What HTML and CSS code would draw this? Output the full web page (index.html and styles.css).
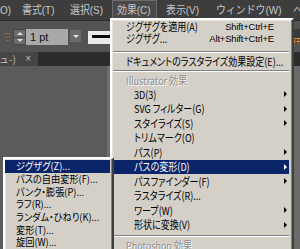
FILE: index.html
```html
<!DOCTYPE html>
<html lang="ja">
<head>
<meta charset="utf-8">
<link rel="stylesheet" href="styles.css">
</head>
<body>
<div class="app">
  <div class="menubar">
    <span class="mb-item first"><span class="t">O)</span></span>
    <span class="mb-item"><span class="t">書式(T)</span></span>
    <span class="mb-item"><span class="t">選択(S)</span></span>
    <span class="mb-item active"><span class="t">効果(C)</span></span>
    <span class="mb-item view"><span class="t">表示(V)</span></span>
    <span class="mb-item win"><span class="t">ウィンドウ(W)</span></span>
    <span class="mb-item"><span class="t">ヘ</span></span>
  </div>
  <div class="toolbar">
    <svg class="stroke-icon" width="7" height="10" viewBox="0 0 7 10">
      <rect x="0" y="1" width="7" height="1" fill="#8a6b45"/>
      <rect x="1" y="4" width="5" height="2" fill="#7a5c3a"/>
      <rect x="2" y="8" width="3" height="1" fill="#8a6b45"/>
    </svg>
    <span class="spinner">
      <span class="spin"><span class="tri-up"></span></span>
      <span class="spin"><span class="tri-down"></span></span>
    </span>
    <span class="field">1 pt</span>
    <span class="dropbtn"><span class="tri-down light"></span></span>
    <span class="preview"><span class="stroke-line"></span></span>
    <span class="tb-right"><span class="orange">用</span></span>
  </div>
  <div class="tabbar">
    <div class="tab"><span class="tab-title">ュ-)</span><span class="tab-x">×</span></div>
  </div>
  <div class="workspace">
    <div class="canvas"></div>
    <div class="side"></div>
  </div>

  <div class="menu main-menu">
    <div class="mi r12"><span class="lbl">ジグザグを適用(A)</span><span class="sc">Shift+Ctrl+E</span></div>
    <div class="mi"><span class="lbl">ジグザグ...</span><span class="sc">Alt+Shift+Ctrl+E</span></div>
    <div class="sep s1"><span class="rule"></span></div>
    <div class="mi"><span class="lbl">ドキュメントのラスタライズ効果設定(E)...</span></div>
    <div class="sep s2"><span class="rule"></span></div>
    <div class="mi hdr"><span class="lbl">Illustrator 効果</span></div>
    <div class="mi fx"><span class="lbl">3D(3)</span><span class="arrow"></span></div>
    <div class="mi fx"><span class="lbl">SVG フィルター(G)</span><span class="arrow"></span></div>
    <div class="mi fx"><span class="lbl">スタイライズ(S)</span><span class="arrow"></span></div>
    <div class="mi fx"><span class="lbl">トリムマーク(O)</span></div>
    <div class="mi fx"><span class="lbl">パス(P)</span><span class="arrow"></span></div>
    <div class="mi fx hl"><span class="lbl">パスの変形(D)</span><span class="arrow"></span></div>
    <div class="mi fx"><span class="lbl">パスファインダー(F)</span><span class="arrow"></span></div>
    <div class="mi fx"><span class="lbl">ラスタライズ(R)...</span></div>
    <div class="mi fx"><span class="lbl">ワープ(W)</span><span class="arrow"></span></div>
    <div class="mi fx"><span class="lbl">形状に変換(V)</span><span class="arrow"></span></div>
    <div class="sep s3"><span class="rule"></span></div>
    <div class="mi hdr ps"><span class="lbl">Photoshop 効果</span></div>
  </div>

  <div class="menu sub-menu">
    <div class="si hl"><span class="lbl">ジグザグ(Z)...</span></div>
    <div class="si"><span class="lbl">パスの自由変形(F)...</span></div>
    <div class="si"><span class="lbl">パンク・膨張(P)...</span></div>
    <div class="si"><span class="lbl">ラフ(R)...</span></div>
    <div class="si"><span class="lbl">ランダム・ひねり(K)...</span></div>
    <div class="si"><span class="lbl">変形(T)...</span></div>
    <div class="si"><span class="lbl">旋回(W)...</span></div>
  </div>
</div>
</body>
</html>
```

FILE: styles.css
```css
* { box-sizing: border-box; }
html, body { margin: 0; padding: 0; }
body {
  width: 300px;
  height: 249px;
  overflow: hidden;
  background: #5b5b5b;
  font-family: "Noto Sans CJK JP", sans-serif;
}
.app {
  position: relative;
  width: 300px;
  height: 249px;
  display: flex;
  flex-direction: column;
}

/* ---------- menu bar ---------- */
.menubar {
  height: 21px;
  flex: none;
  display: grid;
  grid-template-columns: 15px 48px 49px 45px 52px 77px 1fr;
  background: #3d3d3d;
  border-bottom: 1px solid #2b2b2b;
  color: #c6c6c6;
  font-family: "Liberation Sans", "Noto Sans CJK JP", sans-serif;
  font-size: 11px;
  white-space: nowrap;
}
.mb-item {
  display: flex;
  align-items: center;
  padding-left: 7px;
  line-height: 1;
}
.mb-item .t {
  display: inline-block;
  transform: scaleX(0.9);
  transform-origin: left center;
}
.mb-item.first { padding-left: 0; }
.mb-item.view { padding-left: 9px; }
.mb-item.active {
  background: #4a4a4a;
  border: 1px solid #6c6c6c;
  border-bottom: none;
  padding-left: 4px;
}

/* ---------- control bar ---------- */
.toolbar {
  height: 27px;
  flex: none;
  display: flex;
  align-items: flex-start;
  padding: 8px 0 0 4px;
  background: #535353;
}
.stroke-icon { margin-top: 3px; }
.spinner {
  margin-left: 2px;
  width: 13px;
  height: 16px;
  display: flex;
  flex-direction: column;
}
.spin {
  flex: 1;
  display: flex;
  align-items: center;
  justify-content: center;
  background: #6b6b6b;
  border: 1px solid #474747;
}
.spin + .spin { border-top: none; }
.tri-up {
  width: 0; height: 0;
  border-left: 3px solid transparent;
  border-right: 3px solid transparent;
  border-bottom: 3px solid #dcdcdc;
}
.tri-down {
  width: 0; height: 0;
  border-left: 3px solid transparent;
  border-right: 3px solid transparent;
  border-top: 3px solid #dcdcdc;
}
.field {
  width: 42px;
  height: 16px;
  background: #a9a9a9;
  color: #111;
  font-family: "Liberation Sans", sans-serif;
  font-size: 11px;
  line-height: 16px;
  padding-left: 4px;
}
.dropbtn {
  margin: 1px 0 0 2px;
  width: 11px;
  height: 12px;
  background: #6b6b6b;
  display: flex;
  align-items: center;
  justify-content: center;
}
.tri-down.light { border-top-color: #e8e8e8; }
.preview {
  margin: 2px 0 0 7px;
  width: 40px;
  height: 13px;
  background: #e9e9e9;
  padding: 4px 0 0 4px;
}
.stroke-line {
  display: block;
  height: 3px;
  background: #0a0a0a;
}
.tb-right {
  margin-left: auto;
  height: 15px;
  width: 8px;
  background: #3a3a3a;
  overflow: hidden;
}
.orange {
  color: #d08a3a;
  font-size: 12px;
  line-height: 15px;
}

/* ---------- tab bar ---------- */
.tabbar {
  height: 18px;
  flex: none;
  display: flex;
  align-items: flex-end;
  background: #2c2c2c;
  border-top: 4px solid #535353;
}
.tab {
  width: 38px;
  height: 14px;
  background: #454545;
  color: #bdbdbd;
  font-size: 10px;
  line-height: 14px;
  display: flex;
  white-space: nowrap;
}
.tab-title { margin-left: -1px; }
.tab-x { margin-left: auto; margin-right: 7px; font-family: "Liberation Sans", sans-serif; }

/* ---------- workspace ---------- */
.workspace {
  flex: 1;
  display: flex;
}
.canvas {
  flex: 1;
  background: #5b5b5b;
  border-right: 3px solid #6f6f6f;
}
.side {
  width: 190px;
  background: #6a6a6a;
}

/* ---------- menus ---------- */
.menu {
  position: absolute;
  background: #d4d0c8;
  border-style: solid;
  border-width: 2px;
  border-color: #ffffff #404040 #404040 #ffffff;
  box-shadow: inset -1px -1px 0 #808080, inset 1px 1px 0 #e6e3de;
  color: #000;
  white-space: nowrap;
}
.lbl {
  display: inline-block;
  line-height: 1;
  font-feature-settings: "palt";
  transform-origin: left center;
}

.main-menu {
  left: 110px;
  top: 18px;
  width: 184px;
  height: 240px;
  padding: 0 3px 0 1px;
}
.mi {
  display: flex;
  align-items: center;
  height: 13px;
  padding: 0 15px 0 13px;
  font-size: 11px;
}
.mi .lbl { transform: scaleX(0.82); }
.mi.r12 { height: 12px; }
.mi.fx { height: 14.5px; padding: 0 2px 0 21px; }
.mi.ps { height: 14px; }
.mi.hdr { color: #8e8e8e; text-shadow: 1px 1px 0 #ffffff; }
.mi.hl { background: #0a246a; color: #ffffff; }
.sc {
  margin-left: auto;
  font-family: "Liberation Sans", sans-serif;
  font-size: 9.5px;
  letter-spacing: -0.2px;
}
.arrow {
  margin-left: auto;
  width: 0; height: 0;
  border-left: 3px solid #000;
  border-top: 3px solid transparent;
  border-bottom: 3px solid transparent;
}
.hl .arrow { border-left-color: #fff; }

.sep { display: block; }
.sep .rule {
  display: block;
  border-top: 1px solid #808080;
  border-bottom: 1px solid #ffffff;
}
.sep.s1 { height: 10px; padding-top: 6px; }
.sep.s2 { height: 6px; padding-top: 2px; }
.sep.s3 { height: 6px; padding-top: 3px; }

.sub-menu {
  left: 3px;
  top: 157px;
  width: 111px;
  height: 100px;
  padding: 1px 2px 0 0;
}
.si {
  height: 12.67px;
  display: flex;
  align-items: center;
  padding-left: 11px;
  font-size: 10px;
}
.si .lbl { transform: scaleX(0.92); }
.si.hl { background: #0a246a; color: #ffffff; }
```
